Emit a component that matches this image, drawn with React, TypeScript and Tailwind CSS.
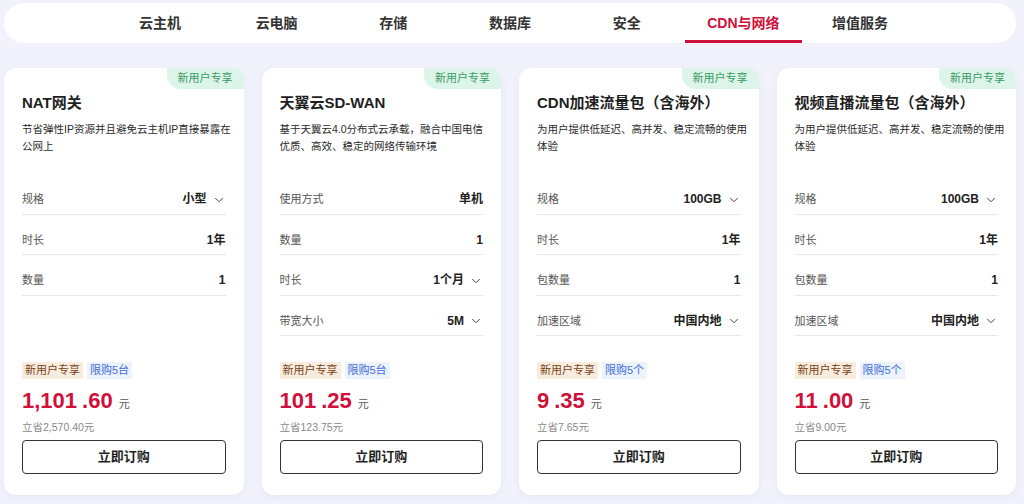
import React from 'react';
import { ChevronDown } from 'lucide-react';

interface SpecRow {
    label: string;
    value: string;
    select?: boolean;
}

interface Product {
    title: string;
    desc: string[];
    rows: SpecRow[];
    limit: string;
    price: [string, string];
    save: string;
}

const tabs = ['云主机', '云电脑', '存储', '数据库', '安全', 'CDN与网络', '增值服务'];
const activeTab = 'CDN与网络';

const products: Product[] = [
    {
        title: 'NAT网关',
        desc: ['节省弹性IP资源并且避免云主机IP直接暴露在', '公网上'],
        rows: [
            { label: '规格', value: '小型', select: true },
            { label: '时长', value: '1年' },
            { label: '数量', value: '1' }
        ],
        limit: '限购5台',
        price: ['1,101', '.60'],
        save: '立省2,570.40元'
    },
    {
        title: '天翼云SD-WAN',
        desc: ['基于天翼云4.0分布式云承载，融合中国电信', '优质、高效、稳定的网络传输环境'],
        rows: [
            { label: '使用方式', value: '单机' },
            { label: '数量', value: '1' },
            { label: '时长', value: '1个月', select: true },
            { label: '带宽大小', value: '5M', select: true }
        ],
        limit: '限购5台',
        price: ['101', '.25'],
        save: '立省123.75元'
    },
    {
        title: 'CDN加速流量包（含海外）',
        desc: ['为用户提供低延迟、高并发、稳定流畅的使用', '体验'],
        rows: [
            { label: '规格', value: '100GB', select: true },
            { label: '时长', value: '1年' },
            { label: '包数量', value: '1' },
            { label: '加速区域', value: '中国内地', select: true }
        ],
        limit: '限购5个',
        price: ['9', '.35'],
        save: '立省7.65元'
    },
    {
        title: '视频直播流量包（含海外）',
        desc: ['为用户提供低延迟、高并发、稳定流畅的使用', '体验'],
        rows: [
            { label: '规格', value: '100GB', select: true },
            { label: '时长', value: '1年' },
            { label: '包数量', value: '1' },
            { label: '加速区域', value: '中国内地', select: true }
        ],
        limit: '限购5个',
        price: ['11', '.00'],
        save: '立省9.00元'
    }
];

const ProductCard: React.FC<{ product: Product }> = ({ product }) => (
    <div className="relative flex h-[427px] flex-col rounded-[12px] bg-white px-[18px] pb-[21px] pt-[24px] shadow-[0_2px_8px_rgba(60,70,140,0.06)]">
        {/* Corner badge */}
        <div className="absolute right-0 top-0 flex h-[21px] w-[77px] items-center justify-center rounded-bl-[14px] rounded-tr-[12px] bg-[#ddf5e8] text-[11px] text-[#3a9a66]">
            新用户专享
        </div>

        <h3 className="h-[22px] text-[15px] font-bold leading-[22px] text-[#1f1f1f]">{product.title}</h3>
        <div className="mt-[7px] h-[34px] text-[10.5px] leading-[17px] text-[#2a2a2a]">
            {product.desc.map((line) => (
                <div key={line} className="whitespace-nowrap">
                    {line}
                </div>
            ))}
        </div>

        {/* Spec rows */}
        <div className="mt-[19px]">
            {product.rows.map((row) => (
                <div
                    key={row.label}
                    className="flex h-[40.5px] items-start justify-between border-b border-[#e6e7ec] pt-[18px]"
                >
                    <span className="text-[11px] leading-[15px] text-[#555]">{row.label}</span>
                    <span className="flex items-center gap-[5px] text-[12px] font-bold leading-[15px] text-[#222]">
                        {row.value}
                        {row.select && <ChevronDown size={14} strokeWidth={1.7} className="text-[#444]" />}
                    </span>
                </div>
            ))}
        </div>

        {/* Price area */}
        <div className="mt-auto">
            <div className="flex gap-[4px]">
                <span className="h-[17px] bg-[#f8ecdf] px-[3px] text-[11px] leading-[17px] text-[#7a4316]">新用户专享</span>
                <span className="h-[17px] bg-[#edf2fc] px-[3px] text-[11px] leading-[17px] text-[#3d6fd8]">{product.limit}</span>
            </div>
            <div className="mt-[8px] flex h-[28px] items-baseline">
                <span className="text-[22px] font-bold leading-[28px] text-[#d0103a]">
                    {product.price[0]}
                    <span className="ml-[5px]">{product.price[1]}</span>
                </span>
                <span className="ml-[6px] text-[11px] text-[#555]">元</span>
            </div>
            <div className="mt-[4px] h-[16px] text-[10.5px] leading-[16px] text-[#888]">{product.save}</div>
            <button className="mt-[5.5px] flex h-[34px] w-full items-center justify-center rounded-[4px] border border-[#333] bg-white text-[13px] font-bold text-[#1f1f1f]">
                立即订购
            </button>
        </div>
    </div>
);

export default function App() {
    return (
        <div
            className="min-h-screen bg-[#f1f2fb] pl-[4px] pr-[8px] pt-[3px]"
            style={{ fontFamily: '"Liberation Sans", "Noto Sans CJK SC", sans-serif' }}
        >
            {/* Category tabs */}
            <nav className="flex h-[40px] justify-center rounded-full bg-white">
                {tabs.map((tab) => {
                    const active = tab === activeTab;
                    return (
                        <div
                            key={tab}
                            className={`relative flex h-full w-[116.7px] items-center justify-center text-[14px] font-bold ${
                                active ? 'text-[#d0103a]' : 'text-[#333]'
                            }`}
                        >
                            {tab}
                            {active && <span className="absolute bottom-0 left-0 right-0 h-[3px] bg-[#d0103a]" />}
                        </div>
                    );
                })}
            </nav>

            {/* Product cards */}
            <div className="mt-[25px] grid grid-cols-4 gap-[18px]">
                {products.map((p) => (
                    <ProductCard key={p.title} product={p} />
                ))}
            </div>
        </div>
    );
}
